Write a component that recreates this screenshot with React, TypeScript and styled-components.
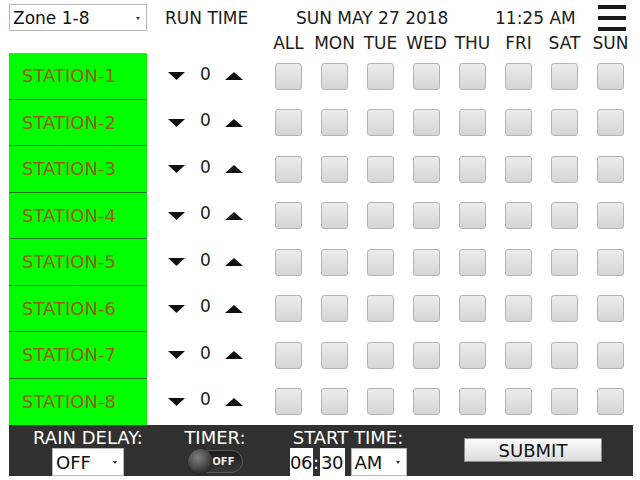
import React from 'react';
import styled, { createGlobalStyle } from 'styled-components';

const GlobalStyle = createGlobalStyle`
  body {
    margin: 0;
    background: #ffffff;
    font-family: "DejaVu Sans", Verdana, sans-serif;
    color: #1c1c1c;
  }
`;

const DAYS = ['ALL', 'MON', 'TUE', 'WED', 'THU', 'FRI', 'SAT', 'SUN'];
const STATIONS = [1, 2, 3, 4, 5, 6, 7, 8];

const App = () => {
  return (
    <>
      <GlobalStyle />
      <Page>
        <TopBar>
          <FakeSelect $width={138} $height={27} $size={17}>
            Zone 1-8
            <Caret />
          </FakeSelect>
          <HeaderText $ml={18} $width={131}>RUN TIME</HeaderText>
          <HeaderText $width={199}>SUN MAY 27 2018</HeaderText>
          <HeaderText $width={103}>11:25 AM</HeaderText>
          <Hamburger>
            <span />
            <span />
            <span />
          </Hamburger>
        </TopBar>

        <DayHeader>
          {DAYS.map((d) => (
            <DayLabel key={d}>{d}</DayLabel>
          ))}
        </DayHeader>

        {STATIONS.map((n) => (
          <Row key={n}>
            <StationCell $last={n === STATIONS.length}>STATION-{n}</StationCell>
            <RunTime>
              <Arrow viewBox="0 0 17 8">
                <polygon points="0,0 17,0 8.5,8" />
              </Arrow>
              <Minutes>0</Minutes>
              <Arrow viewBox="0 0 18 8" $wide>
                <polygon points="9,0 18,8 0,8" />
              </Arrow>
            </RunTime>
            <Checks>
              {DAYS.map((d) => (
                <CheckBox key={d} />
              ))}
            </Checks>
          </Row>
        ))}

        <BottomBar>
          <Field $width={158}>
            <FieldLabel>RAIN DELAY:</FieldLabel>
            <FakeSelect $width={72} $height={28} $size={18}>
              OFF
              <Caret />
            </FakeSelect>
          </Field>
          <Field $width={96}>
            <FieldLabel>TIMER:</FieldLabel>
            <Toggle>
              <Knob />
              <ToggleText>OFF</ToggleText>
            </Toggle>
          </Field>
          <Field $width={170}>
            <FieldLabel>START TIME:</FieldLabel>
            <TimeInputs>
              <TimeBox $width={23}>06</TimeBox>
              <Colon>:</Colon>
              <TimeBox $width={25}>30</TimeBox>
              <FakeSelect $width={56} $height={28} $size={18} style={{ marginLeft: 6 }}>
                AM
                <Caret />
              </FakeSelect>
            </TimeInputs>
          </Field>
          <SubmitCell>
            <SubmitButton>SUBMIT</SubmitButton>
          </SubmitCell>
        </BottomBar>
      </Page>
    </>
  );
};

export default App;

const Page = styled.div`
  width: 624px;
  padding: 4px 0 0 9px;
`;

const TopBar = styled.div`
  display: flex;
  align-items: center;
  height: 27px;
`;

const FakeSelect = styled.div<{ $width: number; $height: number; $size: number }>`
  box-sizing: border-box;
  position: relative;
  width: ${(p) => p.$width}px;
  height: ${(p) => p.$height}px;
  display: flex;
  align-items: center;
  padding-left: 3px;
  background: #ffffff;
  border: 1px solid #b8b8b8;
  color: #111;
  font-size: ${(p) => p.$size}px;
`;

const Caret = styled.span`
  position: absolute;
  right: 6px;
  top: 50%;
  margin-top: -1px;
  width: 0;
  height: 0;
  border-left: 2px solid transparent;
  border-right: 2px solid transparent;
  border-top: 3px solid #333;
`;

const HeaderText = styled.div<{ $ml?: number; $width: number }>`
  margin-left: ${(p) => p.$ml ?? 0}px;
  width: ${(p) => p.$width}px;
  font-size: 17px;
  white-space: nowrap;
`;

const Hamburger = styled.div`
  display: flex;
  flex-direction: column;
  gap: 7px;
  width: 28px;
  span {
    display: block;
    height: 4px;
    background: #1a1a1a;
  }
`;

const DayHeader = styled.div`
  display: grid;
  grid-template-columns: repeat(8, 27px);
  column-gap: 19px;
  margin-left: 266px;
  height: 22px;
  padding-top: 1px;
  box-sizing: border-box;
  align-items: center;
`;

const DayLabel = styled.div`
  display: flex;
  justify-content: center;
  white-space: nowrap;
  font-size: 17px;
`;

const Row = styled.div`
  display: flex;
  align-items: center;
  height: 46.5px;
`;

const StationCell = styled.div<{ $last: boolean }>`
  box-sizing: border-box;
  align-self: stretch;
  width: 138px;
  display: flex;
  align-items: center;
  padding-left: 13px;
  background: #00ff00;
  border-bottom: ${(p) => (p.$last ? 'none' : '1px solid #1f7a1f')};
  color: #9c5a14;
  font-size: 18px;
`;

const RunTime = styled.div`
  display: flex;
  align-items: center;
  width: 128px;
  padding-left: 21px;
  box-sizing: border-box;
`;

const Arrow = styled.svg<{ $wide?: boolean }>`
  flex-shrink: 0;
  width: ${(p) => (p.$wide ? 18 : 17)}px;
  height: 8px;
  fill: #111;
`;

const Minutes = styled.span`
  margin: -4px 14px 0 15px;
  font-size: 17px;
  line-height: 1;
`;

const Checks = styled.div`
  display: grid;
  grid-template-columns: repeat(8, 27px);
  column-gap: 19px;
`;

const CheckBox = styled.div`
  box-sizing: border-box;
  width: 27px;
  height: 27px;
  border: 1px solid #b4b4b4;
  border-radius: 3px;
  background: linear-gradient(#ececec, #d5d5d5);
`;

const BottomBar = styled.div`
  display: flex;
  width: 624px;
  height: 51px;
  background: #303030;
  color: #ffffff;
`;

const Field = styled.div<{ $width: number }>`
  width: ${(p) => p.$width}px;
  display: flex;
  flex-direction: column;
  align-items: center;
  padding-top: 3px;
`;

const FieldLabel = styled.div`
  height: 20px;
  line-height: 20px;
  font-size: 18px;
  white-space: nowrap;
`;

const Toggle = styled.div`
  box-sizing: border-box;
  position: relative;
  margin-top: 2px;
  width: 55px;
  height: 23px;
  border-radius: 12px;
  border: 1px solid #5a5a5a;
  background: linear-gradient(#1a1a1a, #3a3a3a);
  display: flex;
  align-items: center;
  justify-content: flex-end;
  padding-right: 7px;
`;

const Knob = styled.span`
  position: absolute;
  left: -1px;
  top: -2px;
  width: 25px;
  height: 25px;
  border-radius: 50%;
  background: radial-gradient(circle at 40% 35%, #808080, #2a2a2a 75%);
  box-shadow: 0 0 1px #000;
`;

const ToggleText = styled.span`
  font-size: 10px;
  font-weight: bold;
  color: #f0f0f0;
`;

const TimeInputs = styled.div`
  display: flex;
  align-items: center;
`;

const TimeBox = styled.div<{ $width: number }>`
  width: ${(p) => p.$width}px;
  height: 28px;
  background: #ffffff;
  color: #111;
  font-size: 18px;
  display: flex;
  align-items: center;
  justify-content: center;
  letter-spacing: -0.5px;
`;

const Colon = styled.span`
  width: 7px;
  text-align: center;
  font-size: 18px;
`;

const SubmitCell = styled.div`
  width: 200px;
  display: flex;
  align-items: center;
  justify-content: center;
`;

const SubmitButton = styled.div`
  box-sizing: border-box;
  width: 138px;
  height: 24px;
  display: flex;
  align-items: center;
  justify-content: center;
  border: 1px solid #8a8a8a;
  background: linear-gradient(#fbfbfb, #dcdcdc);
  color: #111;
  font-size: 18px;
  margin-top: -1px;
`;
